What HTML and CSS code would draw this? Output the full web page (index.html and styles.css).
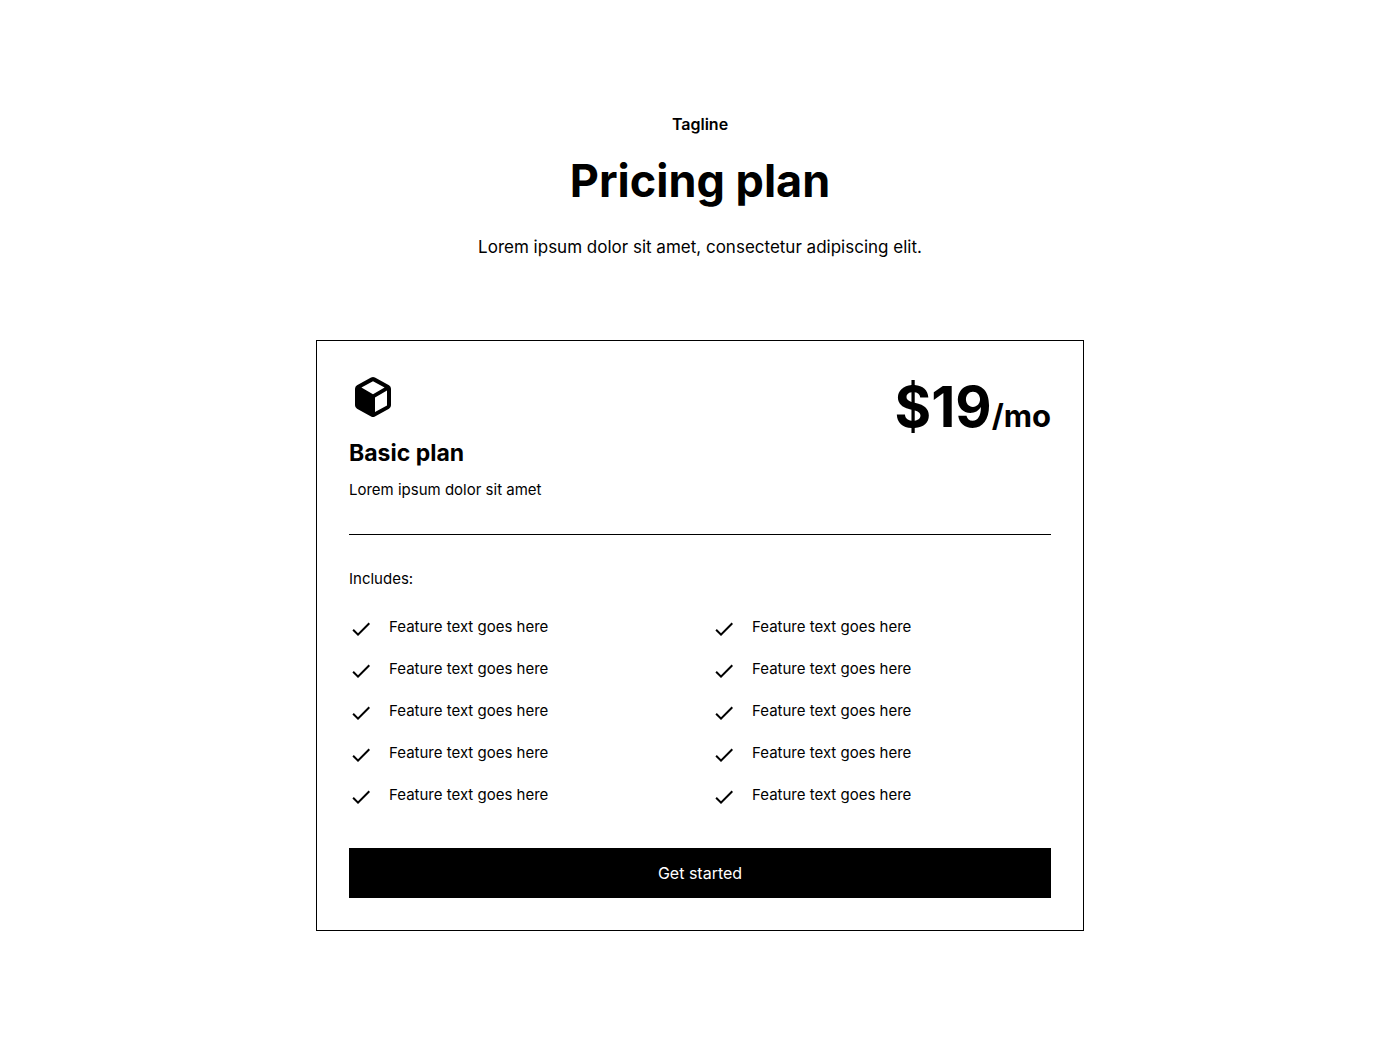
FILE: index.html
```html
<!DOCTYPE html>
<html lang="en">
<head>
  <meta charset="UTF-8">
  <meta name="viewport" content="width=device-width, initial-scale=1">
  <title>Pricing plan</title>
  <link rel="stylesheet" href="styles.css">
</head>
<body>

  <!-- Shared check icon -->
  <svg class="sprite" aria-hidden="true">
    <symbol id="check" viewBox="0 0 24 24">
      <path d="M9 16.17 4.83 12l-1.42 1.41L9 19 21 7l-1.41-1.41z"/>
    </symbol>
  </svg>

  <section class="pricing">
    <header class="pricing-header">
      <p class="tagline">Tagline</p>
      <h1>Pricing plan</h1>
      <p class="intro">Lorem ipsum dolor sit amet, consectetur adipiscing elit.</p>
    </header>

    <div class="card">
      <div class="card-top">
        <div>
          <svg class="plan-icon" viewBox="0 0 24 24" aria-hidden="true">
            <path fill-rule="evenodd" d="M12.97 2.24 20 6.14Q21 6.7 21 7.85V16.15Q21 17.3 20 17.86L12.97 21.76Q12 22.3 11.03 21.76L4 17.86Q3 17.3 3 16.15V7.85Q3 6.7 4 6.14L11.03 2.24Q12 1.7 12.97 2.24ZM12 4.1 6.2 7.2 12 10.6 17.8 7.2ZM19 8.8 13 12.3V19.5L19 16.2Z"/>
          </svg>
          <h2>Basic plan</h2>
          <p>Lorem ipsum dolor sit amet</p>
        </div>
        <p class="price">$19<span>/mo</span></p>
      </div>

      <div class="features">
        <p>Includes:</p>
        <ul>
          <li><svg class="check"><use href="#check"/></svg>Feature text goes here</li>
          <li><svg class="check"><use href="#check"/></svg>Feature text goes here</li>
          <li><svg class="check"><use href="#check"/></svg>Feature text goes here</li>
          <li><svg class="check"><use href="#check"/></svg>Feature text goes here</li>
          <li><svg class="check"><use href="#check"/></svg>Feature text goes here</li>
          <li><svg class="check"><use href="#check"/></svg>Feature text goes here</li>
          <li><svg class="check"><use href="#check"/></svg>Feature text goes here</li>
          <li><svg class="check"><use href="#check"/></svg>Feature text goes here</li>
          <li><svg class="check"><use href="#check"/></svg>Feature text goes here</li>
          <li><svg class="check"><use href="#check"/></svg>Feature text goes here</li>
        </ul>
      </div>

      <button class="cta-btn" type="button">Get started</button>
    </div>
  </section>

</body>
</html>
```

FILE: styles.css
```css
/* Reset and base */
* { margin: 0; padding: 0; box-sizing: border-box; }
body {
  font-family: Inter, 'Liberation Sans', sans-serif;
  font-size: 15px;
  line-height: 24px;
  background: #fff;
  color: #000;
}
.sprite { display: none; }

/* Section heading */
.pricing { padding: 112px 64px; }
.pricing-header {
  max-width: 768px;
  margin: 0 auto 80px;
  text-align: center;
}
.tagline {
  margin-bottom: 16px;
  font-size: 16px;
  font-weight: 600;
}
h1 {
  margin-bottom: 24px;
  font-size: 45px;
  line-height: 58px;
  font-weight: 700;
}
.intro {
  font-size: 17px;
  line-height: 26px;
}

/* Plan card */
.card {
  max-width: 768px;
  margin: 0 auto;
  padding: 32px;
  border: 1px solid #000;
}
.card-top {
  display: flex;
  justify-content: space-between;
  align-items: flex-start;
  padding-bottom: 32px;
  border-bottom: 1px solid #000;
}
.plan-icon {
  display: block;
  width: 48px;
  height: 48px;
  margin-bottom: 16px;
}
h2 {
  margin-bottom: 8px;
  font-size: 23px;
  line-height: 33px;
  font-weight: 700;
}
.price {
  font-size: 56px;
  line-height: 68px;
  font-weight: 700;
}
.price span { font-size: 31px; }

/* Feature list */
.features { padding: 32px 0; }
.features ul {
  display: grid;
  grid-template-columns: 1fr 1fr;
  gap: 16px 24px;
  padding: 8px 0 7px;
  margin-top: 16px;
  list-style: none;
}
.features li {
  display: flex;
  gap: 16px;
}
.check {
  flex: none;
  width: 24px;
  height: 24px;
  margin-top: 2px;
}

.cta-btn {
  width: 100%;
  padding: 12px 24px;
  border: 1px solid #000;
  background: #000;
  color: #fff;
  font: inherit;
  font-size: 16px;
  cursor: pointer;
}
```
